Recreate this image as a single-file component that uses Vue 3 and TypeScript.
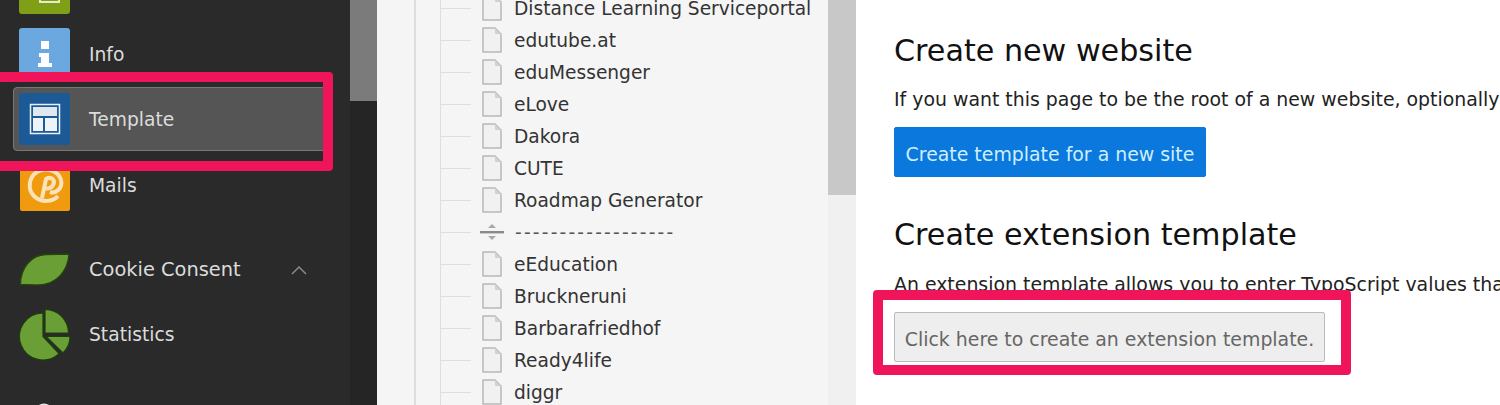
<script setup lang="ts">
const tree: { label: string; sep?: boolean }[] = [
  { label: 'Distance Learning Serviceportal' },
  { label: 'edutube.at' },
  { label: 'eduMessenger' },
  { label: 'eLove' },
  { label: 'Dakora' },
  { label: 'CUTE' },
  { label: 'Roadmap Generator' },
  { label: '------------------', sep: true },
  { label: 'eEducation' },
  { label: 'Bruckneruni' },
  { label: 'Barbarafriedhof' },
  { label: 'Ready4life' },
  { label: 'diggr' },
]
</script>

<template>
  <div class="root">
    <aside class="sidebar">
      <nav class="nav">
        <div class="row">
          <svg class="icon icon-top" viewBox="0 0 51 52">
            <rect width="51" height="52" rx="3" fill="#7f9f17" />
            <rect x="21" y="26" width="19" height="14" fill="none" stroke="#e6ecc8" stroke-width="2" />
          </svg>
        </div>
        <div class="row">
          <svg class="icon icon-info" viewBox="0 0 51 52">
            <rect width="51" height="52" rx="3" fill="#6ba8e0" />
            <path d="M22 13h8v8h-8zM20 25h10v10h3v4H19v-4h3v-6h-2z" fill="#fff" />
          </svg>
          <span>Info</span>
        </div>
        <div class="row selected">
          <svg class="icon" viewBox="0 0 51 52">
            <rect width="51" height="52" rx="3" fill="#1b5a96" />
            <rect x="11.500" y="11.500" width="29" height="29" fill="#1b5a96" stroke="#e8f0f6" stroke-width="1.500" />
            <rect x="14" y="14" width="24" height="9" fill="#dfe8ef" />
            <rect x="14" y="25" width="10" height="13" fill="#eef3f7" />
            <rect x="26" y="25" width="12" height="13" fill="#eef3f7" />
          </svg>
          <span>Template</span>
        </div>
        <div class="row row-mails">
          <svg class="icon icon-mails" viewBox="0 0 50 50">
            <rect width="50" height="50" rx="2" fill="#f09a10" />
            <path d="M38 35C33 41 21 42 14 35 7 28 9 16 17 11 26 6 38 9 41 19 43 27 36 33 30 31" fill="none" stroke="#fbe3b8" stroke-width="4" />
            <path d="M22 37 26 18C31 15 36 19 33 24 31 28 26 28 24 27" fill="none" stroke="#fbe3b8" stroke-width="4" />
          </svg>
          <span>Mails</span>
        </div>
        <div class="row group-start">
          <svg class="icon" viewBox="0 0 51 52">
            <path d="M1.500 40.500C1.500 24 12 11 27 10.500 37 10 45 10.500 50 10 49 27 37 41 19 41 12 41 6 40.500 1.500 40.500Z" fill="#6a9f35" stroke="#23460f" stroke-width="1.300" />
          </svg>
          <span class="grow">Cookie Consent</span>
          <svg class="chevron" viewBox="0 0 16 10"><path d="M1 9 8 2l7 7" fill="none" stroke="#8a8a8a" stroke-width="1.500" /></svg>
        </div>
        <div class="row">
          <svg class="icon" viewBox="0 0 51 52">
            <path d="M24 4A23.500 23.500 0 1 0 40 44.700L24 27.500Z" fill="#6a9f35" stroke="#1e3d10" stroke-width="1.200" />
            <path d="M26 0.500A23.500 23.500 0 0 1 49.500 24H26Z" fill="#6a9f35" stroke="#1e3d10" stroke-width="1.200" />
            <path d="M27 27.500H51C51 35 48 40 44 44Z" fill="#6a9f35" stroke="#1e3d10" stroke-width="1.200" />
          </svg>
          <span>Statistics</span>
        </div>
        <div class="row">
          <svg class="icon" viewBox="0 0 51 52"><circle cx="25" cy="39" r="8" fill="none" stroke="#e8e8e8" stroke-width="3" /></svg>
        </div>
        <div class="mark mark-nav"></div>
      </nav>
      <div class="side-scroll"><div class="side-thumb"></div></div>
    </aside>

    <section class="tree-panel">
      <div class="tree-outer">
        <ul class="tree-inner">
          <li v-for="item in tree" :key="item.label" class="tree-row">
            <i class="branch"></i>
            <svg v-if="item.sep" class="sep-icon" viewBox="0 0 24 20">
              <path d="M12 2l4 4H8zM12 18l-4-4h8z" fill="#a8a8a8" />
              <rect y="9" width="24" height="2.400" fill="#8a8a8a" />
            </svg>
            <svg v-else class="file-icon" viewBox="0 0 20 26">
              <path d="M1 1h12l6 6v18H1z" fill="#f1f1f1" stroke="#b8b8b8" stroke-width="1.500" />
              <path d="M13 1v6h6z" fill="#d0d0d0" />
            </svg>
            <span :class="{ dashes: item.sep }">{{ item.label }}</span>
          </li>
        </ul>
      </div>
      <div class="tree-scroll"><div class="tree-thumb"></div></div>
    </section>

    <main class="content">
      <h2 class="first">Create new website</h2>
      <p>If you want this page to be the root of a new website, optionally</p>
      <button class="btn primary">Create template for a new site</button>
      <h2 class="second">Create extension template</h2>
      <p class="second-p">An extension template allows you to enter TypoScript values that</p>
      <div class="ext-wrap">
        <button class="btn plain">Click here to create an extension template.</button>
        <div class="mark mark-ext"></div>
      </div>
    </main>
  </div>
</template>

<style scoped>
.root {
  display: flex;
  width: 1500px;
  height: 405px;
  overflow: hidden;
  font-family: "DejaVu Sans", Verdana, sans-serif;
  background: #fff;
}
.sidebar {
  display: flex;
  flex: 0 0 377px;
  background: #2a2a2a;
}
.nav {
  position: relative;
  flex: 0 0 350px;
  margin-top: -43px;
}
.row {
  display: flex;
  align-items: center;
  gap: 19px;
  height: 65px;
  padding-left: 19px;
  color: #dcdcdc;
  font-size: 18.700px;
}
.row-mails {
  height: 63px;
  padding-top: 2px;
}
.selected {
  box-sizing: border-box;
  height: 64px;
  margin: 0 20px 1px 13px;
  padding-left: 5px;
  background: #555;
  border: 1px solid #777;
  border-radius: 4px;
}
.group-start { margin-top: 20px; }
.icon {
  flex: none;
  width: 51px;
  height: 52px;
}
.icon-top {
  align-self: flex-start;
  margin-top: 5px;
}
.icon-info { margin-top: -1px; }
.icon-mails {
  width: 50px;
  height: 50px;
  margin-left: 1px;
}
.grow {
  flex: 0 0 183px;
  font-size: 19.400px;
}
.chevron {
  flex: none;
  width: 16px;
  height: 10px;
}
.side-scroll {
  flex: 1;
  background: #252525;
}
.side-thumb {
  height: 101px;
  background: #7b7b7b;
}
.mark {
  position: absolute;
  box-sizing: border-box;
  border: 10px solid #f0145a;
  border-radius: 4px;
  pointer-events: none;
}
.mark-nav {
  left: -12px;
  top: 115px;
  width: 345px;
  height: 99px;
}
.tree-panel {
  display: flex;
  flex: 0 0 479px;
  background: #f5f5f5;
}
.tree-outer {
  flex: 1;
  margin-left: 37px;
  padding-left: 24px;
  border-left: 2px solid #dedede;
}
.tree-inner {
  list-style: none;
  margin: -8px 0 0;
  padding: 0;
  border-left: 1px solid #dedede;
}
.tree-row {
  display: flex;
  align-items: center;
  height: 32px;
  color: #333;
  font-size: 18.600px;
  white-space: nowrap;
}
.branch {
  flex: none;
  width: 30px;
  height: 1px;
  background: #dedede;
}
.file-icon {
  flex: none;
  width: 20px;
  height: 26px;
  margin: 0 12px 0 11px;
}
.sep-icon {
  flex: none;
  width: 24px;
  height: 20px;
  margin: 0 11px 0 9px;
}
.dashes {
  color: #555;
  letter-spacing: 2.200px;
}
.tree-scroll {
  flex: 0 0 28px;
  background: #f0f0f0;
}
.tree-thumb {
  height: 195px;
  background: #c8c8c8;
}
.content {
  flex: 1;
  padding-left: 38px;
  min-width: 0;
  color: #222;
  white-space: nowrap;
}
h2 {
  margin: 0;
  font-size: 30.200px;
  font-weight: 400;
  line-height: 36px;
  color: #111;
}
h2.first { margin-top: 33px; }
h2.second { margin-top: 40px; }
p {
  margin: 0;
  font-size: 18.900px;
  line-height: 24px;
}
.content > p { margin-top: 18px; }
.content > p.second-p { margin-top: 19px; }
.btn {
  display: block;
  box-sizing: border-box;
  height: 50px;
  padding: 3px 0 0;
  border-radius: 2px;
  font: inherit;
  font-size: 18.900px;
  text-align: center;
}
.primary {
  width: 312px;
  margin-top: 16px;
  background: #0a78dc;
  border: 1px solid #0a78dc;
  color: #cfeeff;
}
.ext-wrap {
  position: relative;
  margin-top: 16px;
}
.plain {
  width: 431px;
  background: #eee;
  border: 1px solid #bbb;
  color: #666;
}
.mark-ext {
  left: -21px;
  top: -22px;
  width: 478px;
  height: 85px;
}
</style>
